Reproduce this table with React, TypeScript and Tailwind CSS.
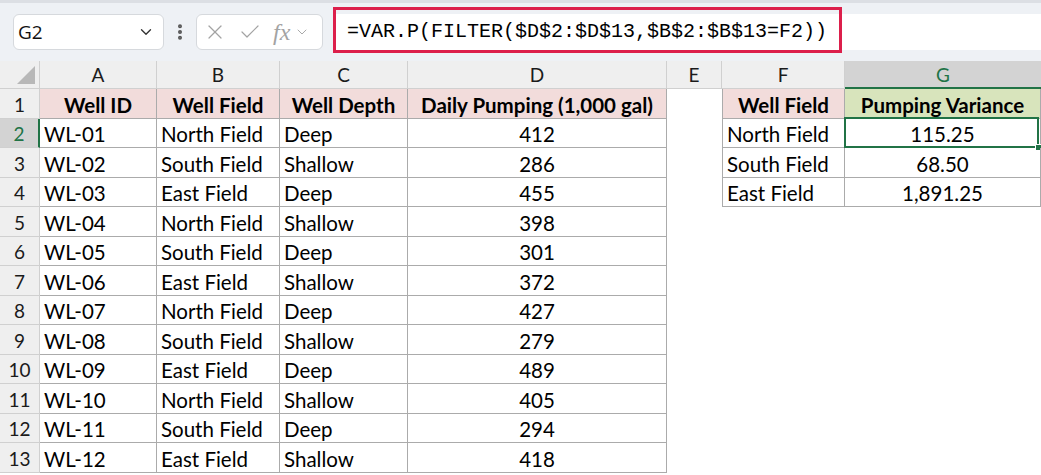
import { X, Check, ChevronDown, EllipsisVertical } from "lucide-react";

type WellRow = [string, string, string, number];

const wells: WellRow[] = [
  ["WL-01", "North Field", "Deep", 412],
  ["WL-02", "South Field", "Shallow", 286],
  ["WL-03", "East Field", "Deep", 455],
  ["WL-04", "North Field", "Shallow", 398],
  ["WL-05", "South Field", "Deep", 301],
  ["WL-06", "East Field", "Shallow", 372],
  ["WL-07", "North Field", "Deep", 427],
  ["WL-08", "South Field", "Shallow", 279],
  ["WL-09", "East Field", "Deep", 489],
  ["WL-10", "North Field", "Shallow", 405],
  ["WL-11", "South Field", "Deep", 294],
  ["WL-12", "East Field", "Shallow", 418],
];

const summary = [
  ["North Field", "115.25"],
  ["South Field", "68.50"],
  ["East Field", "1,891.25"],
];

const cols = ["A", "B", "C", "D", "E", "F", "G"];
const widths = [
  "w-[117px]",
  "w-[123px]",
  "w-[128px]",
  "w-[259px]",
  "w-[55px]",
  "w-[123px]",
  "w-[196px]",
];

const line = "border-[#ababab]";

const FormulaBar = () => (
  <div className="flex h-[61px] items-center border-t-[3px] border-[#dcdfe4] bg-[#eef1f5] pl-[13px]">
    <div className="flex h-[36px] w-[151px] items-center justify-between rounded-[6px] border border-[#d6d9dd] bg-white pl-[4px] pr-[8px]">
      <span className="text-[19px] text-[#111] [font-family:'Open_Sans',sans-serif]">G2</span>
      <ChevronDown className="h-[18px] w-[18px] text-[#333]" strokeWidth={1.8} />
    </div>
    <div className="flex w-[32px] justify-center">
      <EllipsisVertical className="h-[20px] w-[20px] text-[#555]" strokeWidth={2.8} />
    </div>
    <div className="flex h-[36px] w-[127px] items-center gap-[11px] rounded-[6px] border border-[#d6d9dd] bg-white pl-[6px]">
      <X className="h-[24px] w-[24px] text-[#a3a3a3]" strokeWidth={1.2} />
      <Check className="h-[24px] w-[24px] text-[#a3a3a3]" strokeWidth={1.2} />
      <div className="flex items-center">
        <span className="text-[24px] italic leading-none text-[#a3a3a3] [font-family:'Liberation_Serif',serif]">fx</span>
        <ChevronDown className="ml-[4px] h-[16px] w-[16px] text-[#a3a3a3]" strokeWidth={1.4} />
      </div>
    </div>
    <div className="relative ml-[10px] flex h-[36px] flex-1 items-center bg-white pl-[14px]">
      <span className="text-[20px] text-black [font-family:'Liberation_Mono',monospace]">
        =VAR.P(FILTER($D$2:$D$13,$B$2:$B$13=F2))
      </span>
      <div className="absolute left-0 top-[-7px] h-[46px] w-[509px] border-[3px] border-[#dc1f4b]" />
    </div>
  </div>
);

const ColumnHeaders = () => (
  <div className="flex h-[28px] bg-[#efefef] text-[19px] [font-family:Lato,sans-serif]">
    <div className="relative w-[40px] border-r border-b border-[#d0d0d0]">
      <div className="absolute bottom-[4px] right-[4px] h-0 w-0 border-b-[18px] border-l-[18px] border-b-[#b8b8b8] border-l-transparent" />
    </div>
    {cols.map((c, i) =>
      c === "G" ? (
        <div
          key={c}
          className={`${widths[i]} flex items-center justify-center border-b-2 border-[#217346] bg-[#d3d3d3] pt-[2px] text-[#217346]`}
        >
          {c}
        </div>
      ) : (
        <div
          key={c}
          className={`${widths[i]} flex items-center justify-center border-r border-b border-[#d0d0d0] pt-[2px] text-[#1b1b1b]`}
        >
          {c}
        </div>
      )
    )}
  </div>
);

const RowHeader = ({ n }: { n: number }) =>
  n === 2 ? (
    <div className="flex w-[40px] items-center justify-center border-r-2 border-b border-r-[#217346] border-b-[#d0d0d0] bg-[#d3d3d3] pt-[3px] text-[19px] text-[#217346]">
      {n}
    </div>
  ) : (
    <div className="flex w-[40px] items-center justify-center border-r border-b border-[#d0d0d0] bg-[#efefef] pt-[3px] text-[19px] text-[#1b1b1b]">
      {n}
    </div>
  );

export default function App() {
  return (
    <div className="h-[475px] w-[1041px] overflow-hidden bg-white [font-family:Lato,sans-serif]">
      <FormulaBar />
      <ColumnHeaders />

      {/* header row */}
      <div className="flex h-[30px] text-[20.5px]">
        <RowHeader n={1} />
        <div className={`${widths[0]} flex items-center justify-center border-r border-b ${line} bg-[#f2dcdb] pt-[3px] font-bold`}>Well ID</div>
        <div className={`${widths[1]} flex items-center justify-center border-r border-b ${line} bg-[#f2dcdb] pt-[3px] font-bold`}>Well Field</div>
        <div className={`${widths[2]} flex items-center justify-center border-r border-b ${line} bg-[#f2dcdb] pt-[3px] font-bold`}>Well Depth</div>
        <div className={`${widths[3]} flex items-center justify-center whitespace-nowrap border-r border-b ${line} bg-[#f2dcdb] pt-[3px] font-bold`}>Daily Pumping (1,000 gal)</div>
        <div className={widths[4]} />
        <div className={`${widths[5]} flex items-center justify-center border-l border-r border-b ${line} bg-[#f2dcdb] pt-[3px] font-bold`}>Well Field</div>
        <div className={`${widths[6]} flex items-center justify-center border-r border-b ${line} bg-[#d8e4bc] pt-[3px] font-bold`}>Pumping Variance</div>
      </div>

      {wells.map((w, i) => {
        const sum = summary[i];
        return (
          <div key={w[0]} className={`flex text-[20.5px] text-black ${i % 2 === 0 ? "h-[29px]" : "h-[30px]"}`}>
            <RowHeader n={i + 2} />
            <div className={`${widths[0]} flex items-center border-r border-b ${line} pl-[4px] pt-[3px]`}>{w[0]}</div>
            <div className={`${widths[1]} flex items-center border-r border-b ${line} pl-[4px] pt-[3px]`}>{w[1]}</div>
            <div className={`${widths[2]} flex items-center border-r border-b ${line} pl-[4px] pt-[3px]`}>{w[2]}</div>
            <div className={`${widths[3]} flex items-center justify-center border-r border-b ${line} pt-[3px]`}>{w[3]}</div>
            <div className={widths[4]} />
            {sum ? (
              <>
                <div className={`${widths[5]} flex items-center border-l border-r border-b ${line} pl-[4px] pt-[3px]`}>{sum[0]}</div>
                <div className={`${widths[6]} relative flex items-center justify-center border-r border-b ${line} pt-[3px]`}>
                  {sum[1]}
                  {i === 0 && (
                    <>
                      <div className="absolute left-[-1px] top-[-2px] bottom-[-1px] right-[1px] border-2 border-[#217346]" />
                      <div className="absolute bottom-[-4px] right-[-2px] h-[7px] w-[7px] border border-white bg-[#217346]" />
                    </>
                  )}
                </div>
              </>
            ) : null}
          </div>
        );
      })}
    </div>
  );
}
